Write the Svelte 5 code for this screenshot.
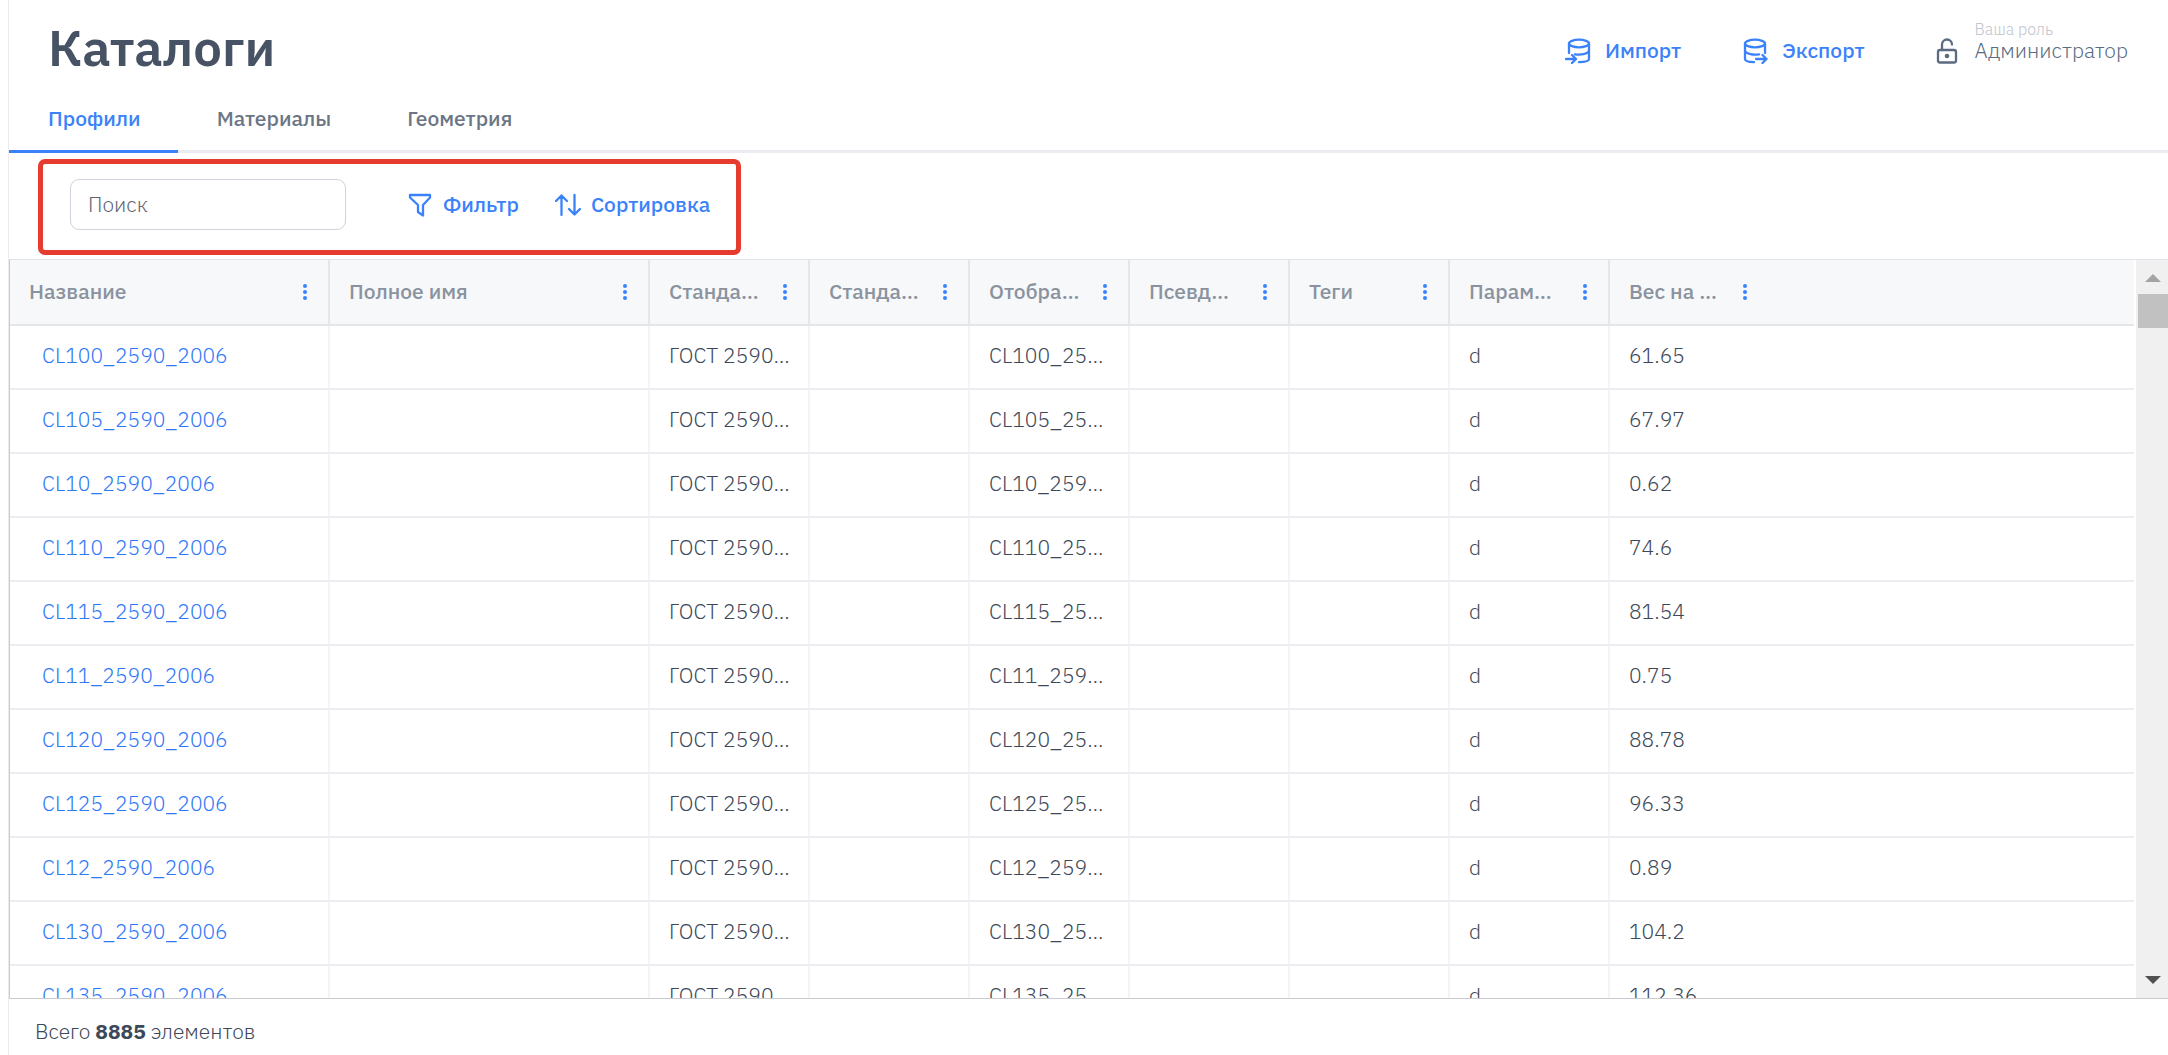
<script>
	const tabs = ['Профили', 'Материалы', 'Геометрия'];
	let activeTab = $state('Профили');
	let search = $state('');

	const columns = [
		{ title: 'Название', wide: true },
		{ title: 'Полное имя', wide: true },
		{ title: 'Станда…' },
		{ title: 'Станда…' },
		{ title: 'Отобра…' },
		{ title: 'Псевд…' },
		{ title: 'Теги' },
		{ title: 'Парам…' },
		{ title: 'Вес на …' }
	];

	const profiles = [
		{ name: 'CL100_2590_2006', weight: '61.65' },
		{ name: 'CL105_2590_2006', weight: '67.97' },
		{ name: 'CL10_2590_2006', weight: '0.62' },
		{ name: 'CL110_2590_2006', weight: '74.6' },
		{ name: 'CL115_2590_2006', weight: '81.54' },
		{ name: 'CL11_2590_2006', weight: '0.75' },
		{ name: 'CL120_2590_2006', weight: '88.78' },
		{ name: 'CL125_2590_2006', weight: '96.33' },
		{ name: 'CL12_2590_2006', weight: '0.89' },
		{ name: 'CL130_2590_2006', weight: '104.2' },
		{ name: 'CL135_2590_2006', weight: '112.36' }
	];

	const total = 8885;
</script>

<div class="page">
	<header class="header">
		<h1>Каталоги</h1>
		<div class="header-actions">
			<button class="text-btn import">
				<svg class="icon" width="26" height="26" viewBox="0 0 26 26">
					<ellipse cx="14" cy="5.5" rx="10" ry="3.8" />
					<path d="M4 5.5V15M24 5.500V21c0 1.800-4 3-10 3.200M10 16.300c6 .8 12.500-.2 14-3.300M1 21h10M7 17l4 4-4 4" />
				</svg>
				Импорт
			</button>
			<button class="text-btn export">
				<svg class="icon" width="26" height="26" viewBox="0 0 26 26">
					<ellipse cx="13" cy="5.5" rx="10" ry="3.8" />
					<path d="M3 5.500V21c0 1.800 3.500 3 9 3.200M23 5.500V15M3 13c1.500 3 8 4 14 3.300M14 21h10.500M20.500 17l4 4-4 4" />
				</svg>
				Экспорт
			</button>
			<div class="role">
				<svg class="icon lock" width="22" height="26" viewBox="0 0 22 26">
					<rect x="2" y="12" width="18" height="12.500" rx="2" />
					<path d="M6 12V6.500a5 5 0 0 1 10 0" />
					<circle class="dot" cx="11" cy="18" r="2.300" />
				</svg>
				<div class="role-text">
					<span class="role-label">Ваша роль</span>
					<span class="role-name">Администратор</span>
				</div>
			</div>
		</div>
	</header>

	<nav class="tabs">
		{#each tabs as tab}
			<button class="tab" class:active={activeTab === tab} onclick={() => (activeTab = tab)}>{tab}</button>
		{/each}
	</nav>

	<div class="toolbar">
		<input class="search" type="text" placeholder="Поиск" aria-label="Поиск" bind:value={search} />
		<button class="text-btn filter">
			<svg class="icon" width="24" height="24" viewBox="0 0 24 24">
				<path d="M2 2h20v2.500l-7 7.500v10.500l-5-3.500v-7L2 4.500z" />
			</svg>
			Фильтр
		</button>
		<button class="text-btn sort">
			<svg class="icon" width="26" height="24" viewBox="0 0 26 24">
				<path d="M6.500 22V2.500M1 8l5.500-5.500L12 8M19.500 2v19.500M14 16l5.500 5.500L25 16" />
			</svg>
			Сортировка
		</button>
	</div>

	<div class="grid">
		<div class="grid-body">
			<table>
				<colgroup>
					{#each columns as column}
						<col class={column.wide ? 'col-wide' : 'col'} />
					{/each}
					<col />
				</colgroup>
				<thead>
					<tr>
						{#each columns as column}
							<th scope="col">
								<div class="th-inner">
									<span>{column.title}</span>
									<button class="menu" aria-label="Меню столбца">
										<svg width="6" height="20" viewBox="0 0 6 20">
											<circle cx="3" cy="4" r="2" />
											<circle cx="3" cy="10" r="2" />
											<circle cx="3" cy="16" r="2" />
										</svg>
									</button>
								</div>
							</th>
						{/each}
						<td></td>
					</tr>
				</thead>
				<tbody>
					{#each profiles as profile}
						<tr>
							<td class="name"><a href="#{profile.name}">{profile.name}</a></td>
							<td></td>
							<td>ГОСТ 2590…</td>
							<td></td>
							<td>{profile.name.slice(0, 8)}…</td>
							<td></td>
							<td></td>
							<td>d</td>
							<td>{profile.weight}</td>
							<td></td>
						</tr>
					{/each}
				</tbody>
			</table>
		</div>
		<div class="scrollbar">
			<svg class="arrow-up" width="16" height="8" viewBox="0 0 16 8"><path d="M0 8l8-8 8 8z" /></svg>
			<div class="thumb"></div>
			<svg class="arrow-down" width="16" height="8" viewBox="0 0 16 8"><path d="M0 0h16l-8 8z" /></svg>
		</div>
	</div>

	<footer class="footer">Всего <strong>{total}</strong> элементов</footer>
</div>

<style>
	:global(body) {
		margin: 0;
		background: #fff;
	}

	.page {
		display: flex;
		flex-direction: column;
		box-sizing: border-box;
		height: 100vh;
		margin-left: 8px;
		border-left: 1px solid #ebebee;
		font-family: 'IBM Plex Sans', Roboto, 'Noto Sans', sans-serif;
		font-size: 21px;
		font-weight: 300;
		line-height: 28px;
		color: #3d4859;
	}

	button,
	input {
		font: inherit;
		border: none;
		background: none;
		padding: 0;
	}

	button {
		cursor: pointer;
	}

	.header {
		display: flex;
		justify-content: space-between;
		align-items: flex-start;
		height: 96px;
		padding: 0 40px 0 39px;
	}

	h1 {
		margin: 15px 0 0;
		font-size: 51px;
		font-weight: 600;
		line-height: 64px;
		color: #475365;
	}

	.header-actions {
		display: flex;
		align-items: center;
		height: 100px;
	}

	.text-btn {
		display: flex;
		align-items: center;
		padding-bottom: 2px;
		font-weight: 500;
		color: #3b82fa;
	}

	.icon {
		flex: none;
		margin-top: 2px;
		fill: none;
		stroke: currentColor;
		stroke-width: 2.3;
		stroke-linecap: round;
		stroke-linejoin: round;
	}

	.import,
	.export {
		gap: 14px;
		margin-right: 61px;
		padding-bottom: 0;
	}

	.role {
		display: flex;
		align-items: center;
		gap: 17px;
		margin-left: 10px;
		color: #5b6b82;
	}

	.role-text {
		position: relative;
	}

	.role-label {
		position: absolute;
		bottom: 25px;
		left: 0;
		font-size: 16px;
		line-height: 20px;
		color: #bfc5d0;
	}

	.lock .dot {
		fill: currentColor;
		stroke: none;
	}

	.tabs {
		display: flex;
		box-shadow: inset 0 -3px #eaecf1;
	}

	.tab {
		height: 57px;
		padding: 0 37px 10px 39px;
		border-bottom: 3px solid transparent;
		font-weight: 500;
		color: #6b7685;
	}

	.tab.active {
		border-color: #3b82fa;
		color: #3b82fa;
	}

	.toolbar {
		display: flex;
		align-items: center;
		align-self: flex-start;
		margin: 6px 0 4px 29px;
		padding: 15px 26px 20px 27px;
		border: 5px solid #e63c2f;
		border-radius: 7px;
	}

	.search {
		box-sizing: border-box;
		width: 276px;
		height: 51px;
		padding: 0 17px 2px;
		border: 1px solid #cfd4dc;
		border-radius: 9px;
		color: #475365;
	}

	.search::placeholder {
		color: #5f6672;
		opacity: 1;
	}

	.filter {
		gap: 11px;
		margin-left: 62px;
	}

	.sort {
		gap: 10px;
		margin-left: 36px;
	}

	.grid {
		display: flex;
		flex: 1;
		min-height: 0;
		border: 1px solid #c8cacf;
		border-top-color: #dfe2e8;
		border-right: none;
		overflow: hidden;
	}

	.grid-body {
		flex: 1;
		min-width: 0;
		margin-right: 2px;
		overflow: hidden;
	}

	table {
		width: 100%;
		table-layout: fixed;
		border-collapse: separate;
		border-spacing: 0;
	}

	.col-wide {
		width: 320px;
	}

	.col {
		width: 160px;
	}

	th,
	td {
		box-sizing: border-box;
		height: 64px;
		padding: 0 17px 4px 19px;
		border-right: 2px solid #f3f4f6;
		border-bottom: 2px solid #ebedf2;
		text-align: left;
		white-space: nowrap;
	}

	thead th,
	thead td {
		height: 66px;
		padding-bottom: 2px;
		background: #f6f8fa;
		border-color: #e3e6eb;
		font-weight: 500;
		color: #8a929e;
	}

	th:nth-last-child(-n + 2),
	td:nth-last-child(-n + 2) {
		border-right: none;
	}

	.th-inner {
		display: flex;
		justify-content: space-between;
		align-items: center;
	}

	th:nth-last-child(2) {
		padding-right: 19px;
	}

	.menu {
		display: flex;
		padding: 2px 3px 0;
	}

	.menu svg {
		fill: #3b82fa;
	}

	.name {
		padding-left: 32px;
	}

	.name a {
		color: #2f78f7;
		text-decoration: none;
	}

	.scrollbar {
		display: flex;
		flex-direction: column;
		align-items: center;
		box-sizing: border-box;
		width: 32px;
		padding: 14px 0 14px 2px;
		background: #f0f0f0;
	}

	.arrow-up {
		fill: #a3a3a3;
	}

	.arrow-down {
		margin-top: auto;
		fill: #505050;
	}

	.thumb {
		align-self: stretch;
		height: 34px;
		margin-top: 12px;
		background: #c1c1c1;
	}

	.footer {
		padding: 18px 26px 10px;
	}

	strong {
		font-weight: 700;
	}
</style>
